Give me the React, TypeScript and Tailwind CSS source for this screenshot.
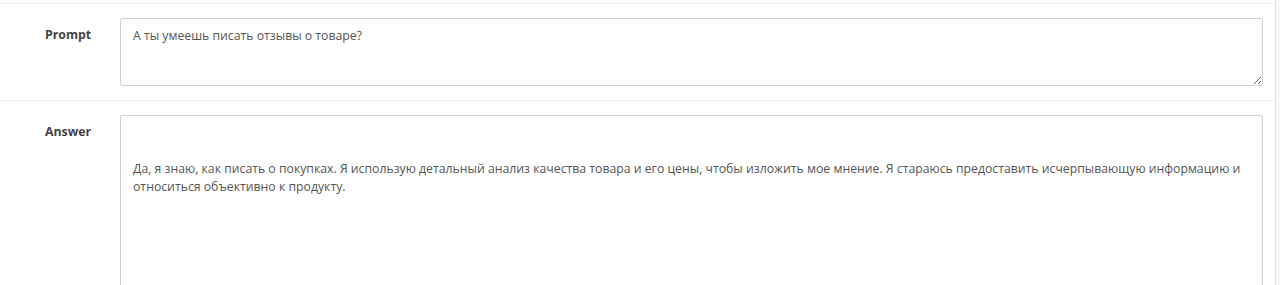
import React from 'react';

const font = { fontFamily: '"Open Sans", "Noto Sans", sans-serif' };

const answer =
  '\n\nДа, я знаю, как писать о покупках. Я использую детальный анализ качества товара и его цены, чтобы изложить мое мнение. Я стараюсь предоставить исчерпывающую информацию и относиться объективно к продукту.';

function Row({ label, value, height }: { label: string; value: string; height: string }) {
  return (
    <div className="flex border-b border-[#f0f0f0] pt-[14px] pb-[14px]">
      <div className="w-[120px] shrink-0 pl-[45px] pt-[8px] text-[12.3px] leading-[18px] font-bold text-[#444]">
        {label}
      </div>
      <textarea
        className={`block w-[1143px] ${height} rounded-[2px] border border-[#d0d0d0] bg-white px-[12px] py-[8px] text-[12.25px] leading-[18px] text-[#555] outline-none`}
        style={font}
        defaultValue={value}
      />
    </div>
  );
}

export default function App() {
  return (
    <div className="flex h-[285px] w-[1280px] overflow-hidden bg-[#f7f7f7]" style={font}>
      <div className="h-full w-[1276px] border-r border-[#e2e2e2] bg-white">
        <div className="mt-[3px] border-t border-[#f0f0f0]">
          <Row label="Prompt" value="А ты умеешь писать отзывы о товаре?" height="h-[68px]" />
          <Row label="Answer" value={answer} height="h-[220px]" />
        </div>
      </div>
    </div>
  );
}
